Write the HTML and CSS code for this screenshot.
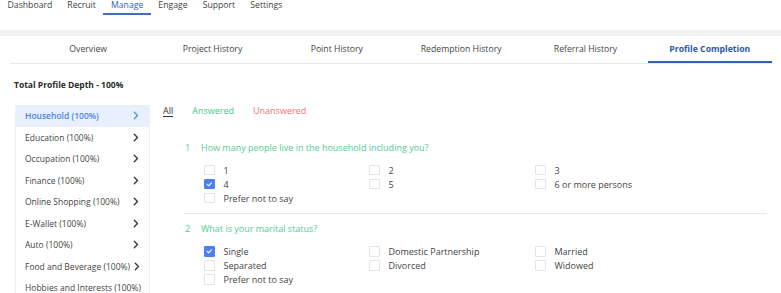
FILE: index.html
```html
<!DOCTYPE html>
<html>
<head>
<meta charset="utf-8">
<link rel="stylesheet" href="styles.css">
</head>
<body>
<nav class="topnav">
  <a class="nav-item">Dashboard</a>
  <a class="nav-item">Recruit</a>
  <a class="nav-item active">Manage</a>
  <a class="nav-item">Engage</a>
  <a class="nav-item">Support</a>
  <a class="nav-item">Settings</a>
</nav>
<div class="band"></div>
<div class="tabs-wrap">
  <div class="tabs">
    <div class="tab">Overview</div>
    <div class="tab">Project History</div>
    <div class="tab">Point History</div>
    <div class="tab">Redemption History</div>
    <div class="tab">Referral History</div>
    <div class="tab active">Profile Completion</div>
  </div>
</div>
<main class="main">
  <h1 class="title">Total Profile Depth - 100%</h1>
  <div class="layout">
    <aside class="sidebar">
      <div class="side-item active"><span class="label">Household (100%)</span><svg class="chev" viewBox="0 0 6 9"><path d="M1.3 1.2 L4.5 4.5 L1.3 7.8" fill="none" stroke-width="1.3" stroke-linecap="round" stroke-linejoin="round"/></svg></div>
      <div class="side-item"><span class="label">Education (100%)</span><svg class="chev" viewBox="0 0 6 9"><path d="M1.3 1.2 L4.5 4.5 L1.3 7.8" fill="none" stroke-width="1.3" stroke-linecap="round" stroke-linejoin="round"/></svg></div>
      <div class="side-item"><span class="label">Occupation (100%)</span><svg class="chev" viewBox="0 0 6 9"><path d="M1.3 1.2 L4.5 4.5 L1.3 7.8" fill="none" stroke-width="1.3" stroke-linecap="round" stroke-linejoin="round"/></svg></div>
      <div class="side-item"><span class="label">Finance (100%)</span><svg class="chev" viewBox="0 0 6 9"><path d="M1.3 1.2 L4.5 4.5 L1.3 7.8" fill="none" stroke-width="1.3" stroke-linecap="round" stroke-linejoin="round"/></svg></div>
      <div class="side-item"><span class="label">Online Shopping (100%)</span><svg class="chev" viewBox="0 0 6 9"><path d="M1.3 1.2 L4.5 4.5 L1.3 7.8" fill="none" stroke-width="1.3" stroke-linecap="round" stroke-linejoin="round"/></svg></div>
      <div class="side-item"><span class="label">E-Wallet (100%)</span><svg class="chev" viewBox="0 0 6 9"><path d="M1.3 1.2 L4.5 4.5 L1.3 7.8" fill="none" stroke-width="1.3" stroke-linecap="round" stroke-linejoin="round"/></svg></div>
      <div class="side-item"><span class="label">Auto (100%)</span><svg class="chev" viewBox="0 0 6 9"><path d="M1.3 1.2 L4.5 4.5 L1.3 7.8" fill="none" stroke-width="1.3" stroke-linecap="round" stroke-linejoin="round"/></svg></div>
      <div class="side-item"><span class="label">Food and Beverage (100%)</span><svg class="chev" viewBox="0 0 6 9"><path d="M1.3 1.2 L4.5 4.5 L1.3 7.8" fill="none" stroke-width="1.3" stroke-linecap="round" stroke-linejoin="round"/></svg></div>
      <div class="side-item"><span class="label">Hobbies and Interests (100%)</span></div>
    </aside>
    <section class="content">
      <div class="filters">
        <span class="filter all">All</span>
        <span class="filter answered">Answered</span>
        <span class="filter unanswered">Unanswered</span>
      </div>
      <div class="question">
        <div class="q-head"><span class="q-num">1</span><span class="q-text">How many people live in the household including you?</span></div>
        <div class="options">
          <label class="opt"><span class="box"></span>1</label>
          <label class="opt"><span class="box"></span>2</label>
          <label class="opt"><span class="box"></span>3</label>
          <label class="opt"><span class="box checked"><svg viewBox="0 0 10 10"><path d="M2.6 5.2 L4.3 6.8 L7.5 3.4" fill="none" stroke="#fff" stroke-width="1.3" stroke-linecap="round" stroke-linejoin="round"/></svg></span>4</label>
          <label class="opt"><span class="box"></span>5</label>
          <label class="opt"><span class="box"></span>6 or more persons</label>
          <label class="opt"><span class="box"></span>Prefer not to say</label>
        </div>
      </div>
      <div class="question second">
        <div class="q-head"><span class="q-num">2</span><span class="q-text">What is your marital status?</span></div>
        <div class="options">
          <label class="opt"><span class="box checked"><svg viewBox="0 0 10 10"><path d="M2.6 5.2 L4.3 6.8 L7.5 3.4" fill="none" stroke="#fff" stroke-width="1.3" stroke-linecap="round" stroke-linejoin="round"/></svg></span>Single</label>
          <label class="opt"><span class="box"></span>Domestic Partnership</label>
          <label class="opt"><span class="box"></span>Married</label>
          <label class="opt"><span class="box"></span>Separated</label>
          <label class="opt"><span class="box"></span>Divorced</label>
          <label class="opt"><span class="box"></span>Widowed</label>
          <label class="opt"><span class="box"></span>Prefer not to say</label>
        </div>
      </div>
    </section>
  </div>
</main>
</body>
</html>
```

FILE: styles.css
```css
* { box-sizing: border-box; }
body {
  margin: 0;
  font-family: "Open Sans", "Noto Sans", sans-serif;
  font-size: 9px;
  color: #4a4a4a;
  background: #fff;
  overflow: hidden;
}
.topnav {
  display: flex;
  height: 15px;
  font-size: 8.7px;
}
.nav-item {
  padding: 0 7.5px;
  line-height: 11px;
  height: 15px;
  color: #3f3f3f;
  border-bottom: 2px solid transparent;
}
.nav-item.active {
  color: #2f62b5;
  border-bottom-color: #3f6fc0;
}
.band {
  margin-top: 15px;
  height: 6px;
  background: #f3f1f2;
}
.tabs-wrap {
  margin: 0 9px 0 10px;
  border-bottom: 1px solid #e6e8eb;
  padding-left: 16px;
}
.tabs {
  display: flex;
  height: 27px;
  font-size: 8.7px;
}
.tab {
  flex: 1;
  text-align: center;
  line-height: 27px;
  color: #444;
  border-bottom: 2px solid transparent;
}
.tab.active {
  color: #2b59a8;
  font-weight: 700;
  border-bottom-color: #2f62b5;
}
.main {
  padding-left: 15px;
}
.title {
  margin: 0 0 0 -1px;
  padding-top: 15px;
  height: 41px;
  font-size: 8.5px;
  font-weight: 700;
  color: #2a2a2a;
  line-height: 12px;
}
.layout {
  display: flex;
}
.sidebar {
  width: 135px;
  flex: none;
  border-left: 1px solid #eef0f3;
  border-right: 1px solid #eef0f3;
  height: 200px;
  font-size: 8.5px;
}
.side-item {
  display: flex;
  align-items: center;
  height: 21.5px;
  padding: 0 10px 0 9px;
  color: #444;
  white-space: nowrap;
}
.side-item .label { flex: 1; }
.side-item.active {
  background: #e9f0fd;
  color: #4f7fe8;
  font-weight: 600;
}
.chev {
  width: 6px;
  height: 9px;
  flex: none;
  margin-left: 4px;
  stroke: #333;
}
.side-item.active .chev { stroke: #5b8def; }
.content {
  flex: 1;
  padding-left: 13px;
  padding-right: 14px;
}
.filters {
  display: flex;
  gap: 19px;
  height: 20px;
  line-height: 12px;
}
.filter.all {
  color: #333;
  border-bottom: 1px solid #333;
  height: 12px;
  line-height: 11px;
}
.filter.answered { color: #46c98f; }
.filter.unanswered { color: #f36f73; }
.question {
  margin-left: 21px;
  padding-top: 17px;
  padding-bottom: 10px;
}
.question.second {
  border-top: 1px solid #e4e8ee;
  padding-top: 9px;
}
.q-head {
  display: flex;
  color: #55c99a;
  height: 12px;
  line-height: 12px;
}
.q-num { width: 17px; padding-left: 1px; }
.options {
  display: grid;
  grid-template-columns: 165px 166px 1fr;
  row-gap: 3.6px;
  padding-left: 20px;
  margin-top: 11px;
}
.opt {
  display: flex;
  align-items: center;
  gap: 9px;
  height: 10.4px;
  color: #444;
  white-space: nowrap;
}
.box {
  width: 10.5px;
  height: 10.5px;
  border: 1px solid #e3e5e9;
  border-radius: 1px;
  flex: none;
  display: flex;
}
.box.checked {
  background: #4d7ff2;
  border-color: #4d7ff2;
}
.box svg { width: 100%; height: 100%; }
```
